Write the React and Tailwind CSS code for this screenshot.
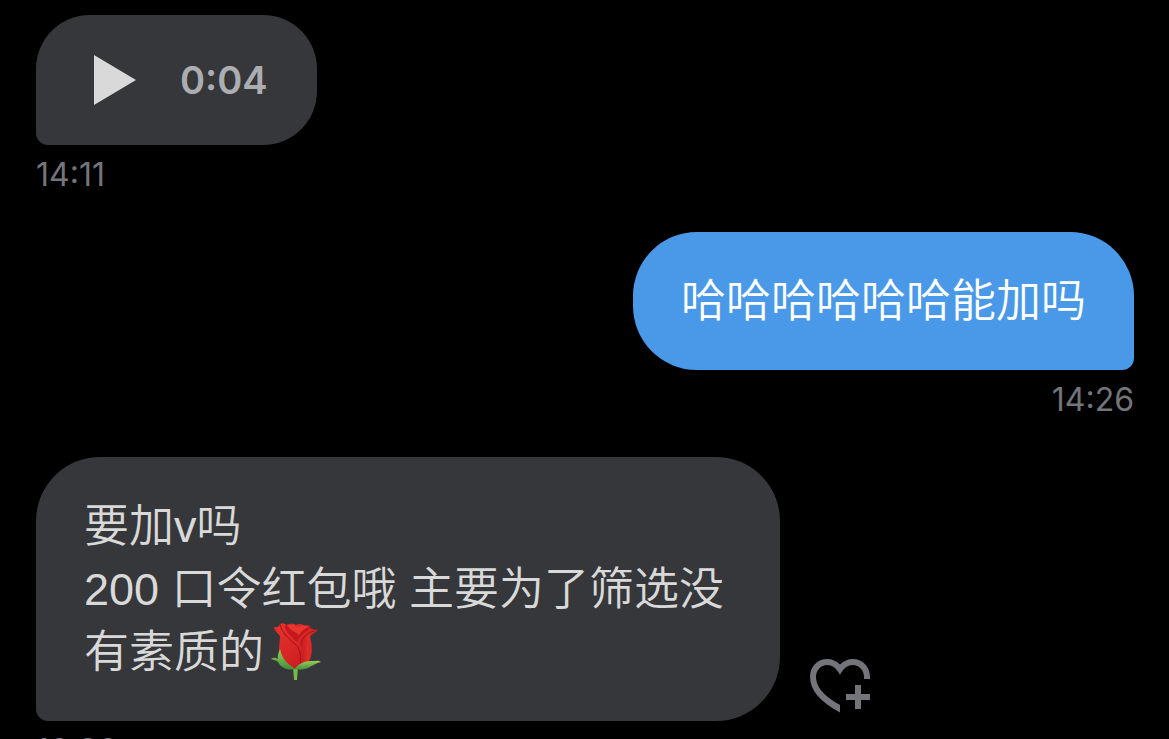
import React from 'react';

const messages = [
  { id: 1, type: 'voice', mine: false, duration: '0:04', time: '14:11' },
  { id: 2, type: 'text', mine: true, text: '哈哈哈哈哈哈能加吗', time: '14:26' },
  {
    id: 3,
    type: 'text',
    mine: false,
    text: '要加v吗\n200 口令红包哦 主要为了筛选没有素质的',
    rose: true,
    canReact: true,
    time: '16:26'
  }
];

const PlayIcon = () => (
  <svg viewBox="0 0 42 50" className="w-[42px] h-[50px]" fill="#d9d9d9" aria-hidden="true">
    <path d="M0 0L42 25L0 50Z" />
  </svg>
);

const HeartPlusIcon = () => (
  <svg viewBox="0 0 60 54" className="w-[60px] h-[54px]" fill="#74757b" aria-hidden="true">
    <path d="M60 20V18C60 7 52 0 43 0C38 0 33.5 2 30 5.500C26.500 2 22 0 17 0C8 0 0 7 0 18C0 31 10 43 30 53.500V46C13 36.500 6 27.500 6 18C6 11 11 6 17 6C23 6 27 10 30 16C33 10 37 6 43 6C49 6 54 11 54 18V20Z" />
    <path d="M45 26H51V35H60V41H51V50H45V41H36V35H45Z" />
  </svg>
);

const Rose = () => (
  <svg viewBox="0 0 52 58" className="inline-block w-[52px] h-[58px] ml-1.5 -mt-3 -mb-1 align-middle" role="img" aria-label="🌹">
    <defs>
      <linearGradient id="petal" x1="0" y1="0" x2="1" y2="1">
        <stop offset="0" stopColor="#e6352e" />
        <stop offset="0.6" stopColor="#d32222" />
        <stop offset="1" stopColor="#b5161b" />
      </linearGradient>
      <linearGradient id="fold" x1="0" y1="0" x2="1" y2="0">
        <stop offset="0" stopColor="#c4181d" />
        <stop offset="0.5" stopColor="#de2d29" />
        <stop offset="1" stopColor="#c01a1e" />
      </linearGradient>
      <linearGradient id="leaf" x1="0" y1="0" x2="0" y2="1">
        <stop offset="0" stopColor="#9ccc5a" />
        <stop offset="1" stopColor="#3f8f3c" />
      </linearGradient>
    </defs>
    <path d="M23 44H28L27 57H24Z" fill="#7ab648" />
    <path d="M4 4C8 5 9 3 10 1C13 0 15 1 17 2C20 0 24 1 26 2C29 0 33 1 35 3C38 1 41 3 40 5C43 7 46 6 48 7C45 10 41 11 40 14C42 21 42 29 40 35C37 43 32 46 26 46C19 46 12 40 10 33C8 26 10 19 10 13C8 10 5 9 4 4Z" fill="url(#petal)" />
    <path d="M15 2C14 8 22 14 27 19C30 13 36 9 40 5C38 1 34 4 31 7C27 2 20 0 15 2Z" fill="#c3191e" />
    <path d="M17 2C20 8 25 8 29 12C31 8 35 5 39 4C34 1 30 3 27 4C24 1 20 1 17 2Z" fill="#e93730" />
    <path d="M48 7C40 8 32 13 31 21C31 28 34 34 29 46C36 45 39 40 41 33C43 25 41 18 40 14C41 11 45 10 48 7Z" fill="url(#fold)" />
    <path d="M10 1C12 10 18 15 24 20C31 26 32 34 29 45M31 22C31 15 37 10 44 8" fill="none" stroke="#a3131a" strokeWidth="1" />
    <path d="M10 26C12 36 18 42 26 46C18 48 11 45 8 39C6 37 3 37 1 36C4 34 6 35 8 36C7 32 9 29 10 26Z" fill="url(#leaf)" />
    <path d="M25 46C28 41 34 38 41 38C45 38 49 37 51 39C46 40 42 43 38 45C33 47 29 47 25 46Z" fill="url(#leaf)" />
  </svg>
);

const VoiceBubble = ({ duration }) => (
  <button
    type="button"
    aria-label={`Play voice message, ${duration}`}
    className="flex items-center gap-11 h-[130px] pl-[58px] pr-[49px] bg-[#36373a] rounded-[54px] rounded-bl-xl"
  >
    <PlayIcon />
    <span className="text-[38px] leading-none font-semibold text-[#acadb1]">{duration}</span>
  </button>
);

const TextBubble = ({ message }) => (
  <p
    className={`max-w-[744px] px-12 pt-[38px] pb-[37px] text-[45px] leading-[63px] font-[350] whitespace-pre-line rounded-[64px] font-['Liberation_Sans','Noto_Sans_CJK_SC',sans-serif] ${
      message.mine ? 'bg-[#4a99e9] text-white rounded-br-xl' : 'bg-[#36373a] text-[#d9d9d9] rounded-bl-xl'
    }`}
  >
    {message.text}
    {message.rose && <Rose />}
  </p>
);

const Message = ({ message }) => (
  <li className={`flex flex-col ${message.mine ? 'items-end' : 'items-start'}`}>
    <div className="flex items-end gap-[30px]">
      {message.type === 'voice' ? <VoiceBubble duration={message.duration} /> : <TextBubble message={message} />}
      {message.canReact && (
        <button type="button" aria-label="Add reaction" className="mb-2">
          <HeartPlusIcon />
        </button>
      )}
    </div>
    <time className="mt-2 text-[32px] leading-[44px] text-[#74757b]">{message.time}</time>
  </li>
);

const App = () => {
  return (
    <main
      lang="zh-CN"
      className="h-screen overflow-hidden bg-black font-['Inter','Noto_Sans_CJK_SC',sans-serif]"
    >
      <ul className="flex flex-col gap-[35px] pt-[15px] pl-9 pr-[35px]">
        {messages.map((message) => (
          <Message key={message.id} message={message} />
        ))}
      </ul>
    </main>
  );
};

export default App;
